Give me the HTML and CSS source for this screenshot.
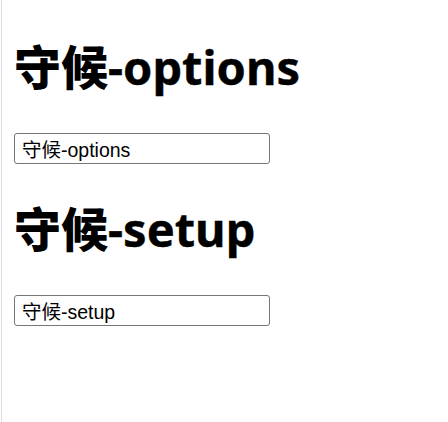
FILE: index.html
```html
<!DOCTYPE html>
<html lang="zh">
<head>
<meta charset="utf-8">
<title>守候</title>
<link rel="stylesheet" href="styles.css">
</head>
<body>
<div class="page">
  <section class="block">
    <h1 class="title"><span class="cjk">守候</span>-options</h1>
    <input class="field" type="text" value="守候-options">
  </section>
  <section class="block">
    <h1 class="title"><span class="cjk">守候</span>-setup</h1>
    <input class="field" type="text" value="守候-setup">
  </section>
</div>
</body>
</html>
```
FILE: styles.css
```css
html, body {
  margin: 0;
  padding: 0;
  background: #fff;
}
.page {
  margin-left: 1px;
  border-left: 1px solid #dcdcdc;
  min-height: 100vh;
  box-sizing: border-box;
  padding: 40px 0 0 12px;
  display: flex;
  flex-direction: column;
  gap: 38px;
}
.block {
  display: flex;
  flex-direction: column;
  align-items: flex-start;
  gap: 38px;
}
.title {
  margin: 0;
  height: 55px;
  font-family: "Noto Sans", "Noto Sans CJK SC", sans-serif;
  font-weight: 700;
  font-size: 47px;
  line-height: 55px;
  color: #000;
  -webkit-text-stroke: 0.4px #000;
}
.cjk {
  font-family: "Noto Sans CJK SC", sans-serif;
  font-weight: 900;
  line-height: 1;
  -webkit-text-stroke: 0;
}
.field {
  box-sizing: border-box;
  width: 256px;
  height: 31px;
  margin: 0;
  padding: 1px 7px;
  border: 1px solid #767676;
  border-radius: 3px;
  font-family: "Liberation Sans", "Noto Sans CJK SC", sans-serif;
  font-size: 19.5px;
  color: #000;
  background: #fff;
  outline: none;
}
```
